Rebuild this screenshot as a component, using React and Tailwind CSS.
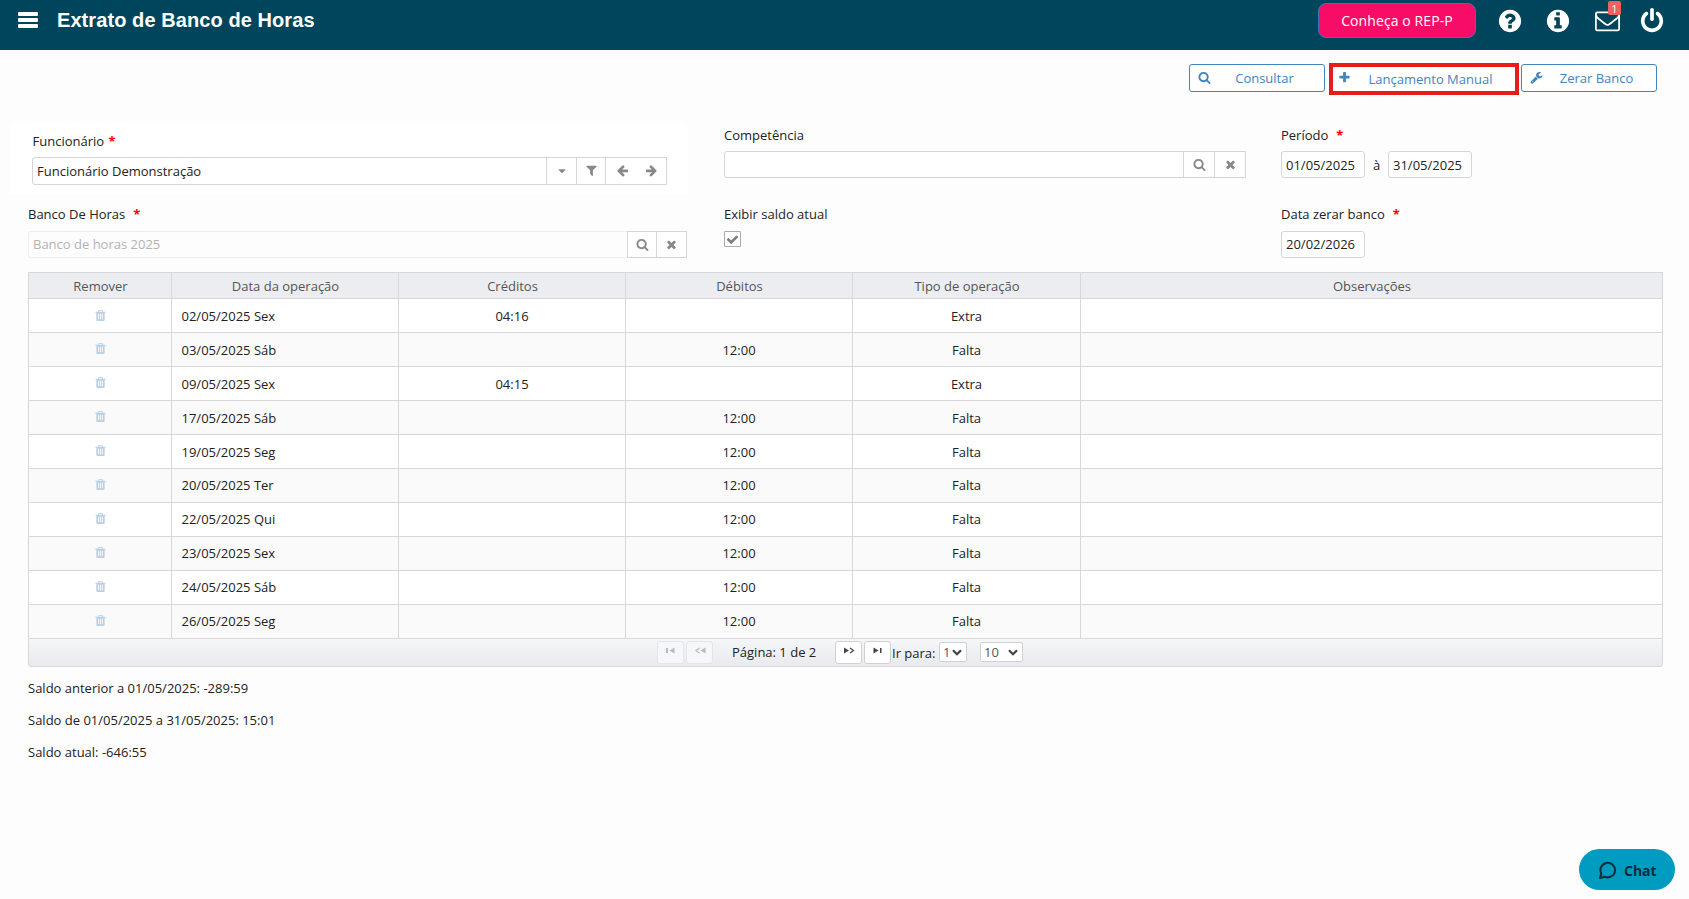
import React from "react";

const CIRCLE =
  "M1664 896q0 209-103 385.5t-279.5 279.5-385.5 103-385.5-103-279.5-279.5-103-385.5 103-385.5 279.5-279.5 385.5-103 385.5 103 279.5 279.5 103 385.5z";

const ICONS = {
  search:
    "M1216 832q0-185-131.5-316.5t-316.5-131.5-316.5 131.5-131.5 316.5 131.5 316.5 316.5 131.5 316.5-131.5 131.5-316.5zm512 832q0 52-38 90t-90 38q-54 0-90-38l-343-342q-179 124-399 124-143 0-273.5-55.5t-225-150-150-225-55.5-273.5 55.5-273.5 150-225 225-150 273.5-55.5 273.5 55.5 225 150 150 225 55.5 273.5q0 220-124 399l343 343q37 37 37 90z",
  plus:
    "M1600 736v192q0 40-28 68t-68 28h-416v416q0 40-28 68t-68 28h-192q-40 0-68-28t-28-68v-416h-416q-40 0-68-28t-28-68v-192q0-40 28-68t68-28h416v-416q0-40 28-68t68-28h192q40 0 68 28t28 68v416h416q40 0 68 28t28 68z",
  wrench:
    "M448 1472q0-26-19-45t-45-19-45 19-19 45 19 45 45 19 45-19 19-45zm644-420l-682 682q-37 37-90 37-52 0-91-37l-106-108q-38-36-38-90 0-53 38-91l681-681q39 98 114.5 173.5t173.5 114.5zm634-435q0 39-23 106-47 134-164.5 217.5t-258.5 83.5q-185 0-316.5-131.5t-131.5-316.5 131.5-316.5 316.5-131.5q58 0 121.5 16.5t107.5 46.5q16 11 16 28t-16 28l-293 169v224l193 107q5-3 79-48.5t135.5-81 70.5-35.5q15 0 23.5 10t8.5 25z",
  times:
    "M1490 1322q0 40-28 68l-136 136q-28 28-68 28t-68-28l-294-294-294 294q-28 28-68 28t-68-28l-136-136q-28-28-28-68t28-68l294-294-294-294q-28-28-28-68t28-68l136-136q28-28 68-28t68 28l294 294 294-294q28-28 68-28t68 28l136 136q28 28 28 68t-28 68l-294 294 294 294q28 28 28 68z",
  filter:
    "M1595 295q17 41-14 70l-493 493v742q0 42-39 59-13 5-25 5-27 0-45-19l-256-256q-19-19-19-45v-486l-493-493q-31-29-14-70 17-39 59-39h1280q42 0 59 39z",
  arrow:
    "M1664 896v128q0 53-32.5 90.5t-84.5 37.5h-704l293 294q38 36 38 90t-38 90l-75 76q-37 37-90 37-52 0-91-37l-651-652q-37-37-37-90 0-52 37-91l651-650q38-38 91-38 52 0 90 38l75 74q38 38 38 91t-38 91l-293 293h704q52 0 84.5 37.5t32.5 90.5z",
  question:
    "M1024 1376v-192q0-14-9-23t-23-9h-192q-14 0-23 9t-9 23v192q0 14 9 23t23 9h192q14 0 23-9t9-23zm256-672q0-88-55.5-163t-138.5-116-170-41q-243 0-371 213-15 24 8 42l132 100q7 6 19 6 16 0 25-12 53-68 86-92 34-24 86-24 48 0 85.5 26t37.5 59q0 38-20 61t-68 45q-63 28-115.5 86.5t-52.5 125.5v36q0 14 9 23t23 9h192q14 0 23-9t9-23q0-19 21.5-49.5t54.5-49.5q32-18 49-28.5t46-35 44.5-48 28-60.5 12.5-81z" +
    CIRCLE,
  info:
    "M1152 1376v-160q0-14-9-23t-23-9h-96v-512q0-14-9-23t-23-9h-320q-14 0-23 9t-9 23v160q0 14 9 23t23 9h96v320h-96q-14 0-23 9t-9 23v160q0 14 9 23t23 9h448q14 0 23-9t9-23zm-128-896v-160q0-14-9-23t-23-9h-192q-14 0-23 9t-9 23v160q0 14 9 23t23 9h192q14 0 23-9t9-23z" +
    CIRCLE,
  envelope:
    "M1664 1504v-768q-32 36-69 66-268 206-426 338-51 43-83 67t-86.5 48.5-102.5 24.5h-2q-48 0-102.5-24.5t-86.5-48.5-83-67q-158-132-426-338-37-30-69-66v768q0 13 9.5 22.5t22.5 9.5h1472q13 0 22.5-9.5t9.5-22.5zm0-1051v-24.5l-.5-13-3-12.5-5.5-9-9-7.5-14-2.5h-1472q-13 0-22.5 9.5t-9.5 22.5q0 168 147 284 193 152 401 317 6 5 35 29.5t46 37.5 44.5 31.5 50.5 27.5 43 9h2q20 0 43-9t50.5-27.5 44.5-31.5 46-37.5 35-29.5q208-165 401-317 54-43 100.5-115.5t46.5-131.5zm128-37v1088q0 66-47 113t-113 47h-1472q-66 0-113-47t-47-113v-1088q0-66 47-113t113-47h1472q66 0 113 47t47 113z",
  power:
    "M1664 896q0 156-61 298t-164 245-245 164-298 61-298-61-245-164-164-245-61-298q0-182 80.5-343t226.5-270q43-32 95.5-25t83.5 50q32 42 24.5 94.5t-49.5 84.5q-98 74-151.5 181t-53.5 228q0 104 40.5 198.5t109.5 163.5 163.5 109.5 198.5 40.5 198.5-40.5 163.5-109.5 109.5-163.5 40.5-198.5q0-121-53.5-228t-151.5-181q-42-32-49.5-84.5t24.5-94.5q31-43 84-50t95 25q146 109 226.5 270t80.5 343zm-640-768v640q0 52-38 90t-90 38-90-38-38-90v-640q0-52 38-90t90-38 90 38 38 90z",
  trash:
    "M704 1376v-704q0-14-9-23t-23-9h-64q-14 0-23 9t-9 23v704q0 14 9 23t23 9h64q14 0 23-9t9-23zm256 0v-704q0-14-9-23t-23-9h-64q-14 0-23 9t-9 23v704q0 14 9 23t23 9h64q14 0 23-9t9-23zm256 0v-704q0-14-9-23t-23-9h-64q-14 0-23 9t-9 23v704q0 14 9 23t23 9h64q14 0 23-9t9-23zm-544-992h448l-48-117q-7-9-17-11h-317q-10 2-17 11zm928 32v64q0 14-9 23t-23 9h-96v948q0 83-47 143.5t-113 60.5h-832q-66 0-113-58.5t-47-141.5v-952h-96q-14 0-23-9t-9-23v-64q0-14 9-23t23-9h309l70-167q15-37 54-63t79-26h320q40 0 79 26t54 63l70 167h309q14 0 23 9t9 23z",
  check:
    "M1671 566q0 40-28 68l-724 724-136 136q-28 28-68 28t-68-28l-136-136-362-362q-28-28-28-68t28-68l136-136q28-28 68-28t68 28l294 295 656-657q28-28 68-28t68 28l136 136q28 28 28 68z",
  caret: "M1408 704q0 26-19 45l-448 448q-19 19-45 19t-45-19l-448-448q-19-19-19-45t19-45 45-19h896q26 0 45 19t19 45z",
};

function Icon({ name, className = "" }) {
  return (
    <svg viewBox="0 0 1792 1792" fill="currentColor" fillRule="evenodd" className={`block shrink-0 overflow-visible ${className}`}>
      <path d={ICONS[name]} />
    </svg>
  );
}

function Label({ children, required, tight }) {
  return (
    <div className={`flex h-[18px] items-center leading-[18px] ${tight ? "pl-[0.5px]" : ""}`}>
      {children}
      {required && <span className={`font-bold text-[#f00] ${tight ? "ml-[4.500px]" : "ml-2"}`}>*</span>}
    </div>
  );
}

function DateInput({ value, className = "pt-px" }) {
  return (
    <div className={`flex h-[27px] w-[84px] items-center rounded-[3px] border border-[#d5d5d5] bg-white pl-1 ${className}`}>{value}</div>
  );
}

function AddOn({ icon, className = "", iconSize = "size-[13px]" }) {
  return (
    <div className={`flex items-center justify-center border-l border-[#d5d5d5] bg-white pb-px text-[#888] ${className}`}>
      <Icon name={icon} className={iconSize} />
    </div>
  );
}

function ActionButton({ icon, children, className = "" }) {
  return (
    <div className={`flex h-7 w-[136px] items-center rounded-[3px] border border-[#4384bd] bg-white text-[#4384bd] ${className}`}>
      <Icon name={icon} className="-mt-0.5 ml-2 size-[13px]" />
      <span className="flex-1 pr-[6px] text-center">{children}</span>
    </div>
  );
}

function PageButton({ kind, disabled }) {
  const shapes = {
    first: (
      <>
        <rect x="0" y="1" width="2" height="5" />
        <path d="M8.500 0.500V6.500L3.500 3.500z" />
      </>
    ),
    prev: (
      <>
        <path d="M4.500 1L1 3.500L4.500 6" fill="none" stroke="currentColor" strokeWidth="1.200" />
        <path d="M10.500 0.500V6.500L5.500 3.500z" />
      </>
    ),
    next: (
      <>
        <path d="M0 0.500V6.500L5 3.500z" />
        <path d="M6 1L9.500 3.500L6 6" fill="none" stroke="currentColor" strokeWidth="1.200" />
      </>
    ),
    last: (
      <>
        <path d="M0.500 0.500V6.500L5.500 3.500z" />
        <rect x="7" y="1" width="1.500" height="5" />
      </>
    ),
  };
  return (
    <div
      className={`flex h-[23px] w-[27px] justify-center rounded-[3px] border pt-[5px] ${
        disabled ? "border-[#e4e5e8] bg-[#f6f7f9] text-[#b9babc]" : "border-[#d0d1d4] bg-white text-[#444]"
      }`}
    >
      <svg viewBox="0 0 10 7" className="block h-[7px] w-[10px] overflow-visible" fill="currentColor">
        {shapes[kind]}
      </svg>
    </div>
  );
}

function PageSelect({ value, className }) {
  return (
    <div className={`flex h-5 items-center justify-between rounded-[2px] border border-[#d0d1d4] bg-white pl-[3px] pr-1 text-[#555] ${className}`}>
      <span>{value}</span>
      <svg viewBox="0 0 10 7" className="block h-[7px] w-[10px]" fill="none" stroke="#444" strokeWidth="2.300">
        <path d="M1 1.200L5 5.200L9 1.200" />
      </svg>
    </div>
  );
}

const ROWS = [
  ["02/05/2025 Sex", "04:16", "", "Extra"],
  ["03/05/2025 Sáb", "", "12:00", "Falta"],
  ["09/05/2025 Sex", "04:15", "", "Extra"],
  ["17/05/2025 Sáb", "", "12:00", "Falta"],
  ["19/05/2025 Seg", "", "12:00", "Falta"],
  ["20/05/2025 Ter", "", "12:00", "Falta"],
  ["22/05/2025 Qui", "", "12:00", "Falta"],
  ["23/05/2025 Sex", "", "12:00", "Falta"],
  ["24/05/2025 Sáb", "", "12:00", "Falta"],
  ["26/05/2025 Seg", "", "12:00", "Falta"],
];

const HEADERS = ["Remover", "Data da operação", "Créditos", "Débitos", "Tipo de operação", "Observações"];
const GRID = "grid grid-cols-[143px_227px_227px_227px_228px_583px]";
const CELL = "flex items-center border-l border-t border-[#d8d8d9] last:border-r";

export default function App() {
  return (
    <div className="relative h-[899px] w-[1689px] overflow-hidden bg-[#fdfdfd] font-['Open_Sans',sans-serif] text-[13px] leading-[18px] text-[#222]">
      <header className="flex h-[50px] items-start bg-[#00455c] text-white">
        <div className="ml-[18px] mt-3 flex w-5 flex-col gap-0.5">
          <div className="h-1 rounded-[1px] bg-white" />
          <div className="h-1 rounded-[1px] bg-white" />
          <div className="h-1 rounded-[1px] bg-white" />
        </div>
        <h1 className="ml-[19px] mt-2 font-['Liberation_Sans',sans-serif] text-[20px] font-bold leading-6 tracking-[0.08px]">
          Extrato de Banco de Horas
        </h1>
        <div className="ml-auto flex items-start pr-6">
          <div className="mt-[3px] flex h-[35px] w-[158px] items-center justify-center rounded-[8px] border border-[#337ab7] bg-[#f70d68] text-[14px] tracking-[0.1px]">
            Conheça o REP-P
          </div>
          <Icon name="question" className="ml-[21px] mt-2 size-[26px]" />
          <Icon name="info" className="ml-[22px] mt-2 size-[26px]" />
          <div className="relative ml-[24px] mt-2">
            <Icon name="envelope" className="size-[25px]" />
            <span className="absolute -top-[7px] left-[13px] flex h-[14px] w-[13px] items-center justify-center rounded-[2px] bg-[#f06061] text-[11px] leading-none">
              1
            </span>
          </div>
          <Icon name="power" className="ml-[19px] mt-2 size-[26px]" />
        </div>
      </header>

      <div className="flex h-[71px] justify-end pr-8 pt-[13px]">
        <ActionButton icon="search" className="mr-1 mt-px">Consultar</ActionButton>
        <div className="flex h-8 w-[190px] items-center border-[4px] border-[#e91c1c] bg-white text-[#4384bd]">
          <Icon name="plus" className="-mt-1 ml-[5px] size-[13px]" />
          <span className="flex-1 pb-px pr-[5px] text-center">Lançamento Manual</span>
        </div>
        <ActionButton icon="wrench" className="ml-0.5 mt-px">Zerar Banco</ActionButton>
      </div>

      <div className="flex h-[151px] items-start">
        <section className="ml-2.5 w-[677px]">
          <div className="h-[73px] bg-white pl-[22px] pt-[11px]">
            <Label required tight>Funcionário</Label>
            <div className="mt-[7px] flex h-7 w-[635px] rounded-l-[3px] border border-[#d5d5d5] bg-white">
              <div className="flex flex-1 items-center pl-1">Funcionário Demonstração</div>
              <AddOn icon="caret" className="w-[30px]" iconSize="size-[12px]" />
              <AddOn icon="filter" className="w-[29px]" />
              <div className="flex w-[61px] items-center border-l border-[#d5d5d5] pb-px pl-[9.500px] text-[#888]">
                <Icon name="arrow" className="size-[13px]" />
                <Icon name="arrow" className="ml-[16px] size-[13px] -scale-x-100" />
              </div>
            </div>
          </div>
          <div className="pl-[18px] pt-[11px]">
            <Label required>Banco De Horas</Label>
            <div className="mt-2 flex h-[27px]">
              <div className="flex flex-1 items-center rounded-l-[3px] border border-r-0 border-[#eee] pb-0.5 pl-1 text-[#b3b3b3]">Banco de horas 2025</div>
              <AddOn icon="search" className="w-[29px] border-y" />
              <AddOn icon="times" className="w-[31px] border" />
            </div>
          </div>
        </section>

        <section className="ml-[37px] w-[522px] pt-[5px]">
          <Label>Competência</Label>
          <div className="mt-[7px] flex h-[27px] rounded-l-[3px] border border-[#d5d5d5] bg-white">
            <div className="flex-1" />
            <AddOn icon="search" className="w-[31px]" />
            <AddOn icon="times" className="w-[31px]" />
          </div>
          <div className="mt-[27px]">
            <Label>Exibir saldo atual</Label>
          </div>
          <div className="mt-2 flex h-4 w-[17px] items-center justify-center rounded-[1px] border border-[#a9a9a9] bg-white text-[#7d7d7d]">
            <Icon name="check" className="size-[13px]" />
          </div>
        </section>

        <section className="ml-[35px] pt-[5px]">
          <Label required>Período</Label>
          <div className="mt-[7px] flex items-center">
            <DateInput value="01/05/2025" />
            <span className="w-[23px] text-center">à</span>
            <DateInput value="31/05/2025" />
          </div>
          <div className="mt-[27px]">
            <Label required>Data zerar banco</Label>
          </div>
          <div className="mt-2">
            <DateInput value="20/02/2026" className="pb-0.5" />
          </div>
        </section>
      </div>

      <div className="ml-7 w-[1635px]">
        <div className={`${GRID} h-[26px] bg-[#ebedf1] text-[#555]`}>
          {HEADERS.map((h) => (
            <div key={h} className={`${CELL} justify-center pl-px pt-px`}>{h}</div>
          ))}
        </div>
        {ROWS.map(([date, credit, debit, kind], i) => {
          const lift = i > 4 ? "pb-0.5" : "";
          return (
            <div key={date} className={`${GRID} h-[34px] ${i % 2 ? "bg-[#fafafa]" : "bg-white"}`}>
              <div className={`${CELL} justify-center text-[#bad0e6] ${i ? "pb-0.5" : ""}`}>
                <Icon name="trash" className="size-[13px]" />
              </div>
              <div className={`${CELL} pl-[9.500px] ${lift}`}>{date}</div>
              <div className={`${CELL} justify-center ${lift}`}>{credit}</div>
              <div className={`${CELL} justify-center ${lift}`}>{debit}</div>
              <div className={`${CELL} justify-center ${lift}`}>{kind}</div>
              <div className={CELL} />
            </div>
          );
        })}
        <div className="flex h-[29px] items-start rounded-b-[3px] border border-[#d8d8d9] bg-gradient-to-b from-[#f5f6f8] to-[#e9eaee] pl-[628px] pt-0.5">
          <PageButton kind="first" disabled />
          <div className="ml-0.5">
            <PageButton kind="prev" disabled />
          </div>
          <span className="ml-[19px] w-[103px] pt-0.5">Página: 1 de 2</span>
          <PageButton kind="next" />
          <div className="ml-0.5">
            <PageButton kind="last" />
          </div>
          <span className="w-12 pl-px pt-[3px]">Ir para:</span>
          <PageSelect value="1" className="mt-px w-7" />
          <PageSelect value="10" className="ml-[13px] mt-px w-[43px]" />
        </div>
        <div className="mt-3 flex flex-col gap-[14px]">
          <p>Saldo anterior a 01/05/2025: -289:59</p>
          <p>Saldo de 01/05/2025 a 31/05/2025: 15:01</p>
          <p>Saldo atual: -646:55</p>
        </div>
      </div>

      <div className="absolute left-[1579px] top-[849px] flex h-[41px] w-24 items-center rounded-full bg-[#009bc0] pl-5 text-[#0b2e3a]">
        <svg viewBox="0 0 18 18" className="size-[18px]" fill="none" stroke="currentColor" strokeWidth="2" strokeLinejoin="round">
          <path d="M1 17L2.300 12.600A7.300 7.300 0 1 1 5.600 15.700z" />
        </svg>
        <span className="ml-[7px] mt-0.5 text-[14px] font-bold">Chat</span>
      </div>
    </div>
  );
}
